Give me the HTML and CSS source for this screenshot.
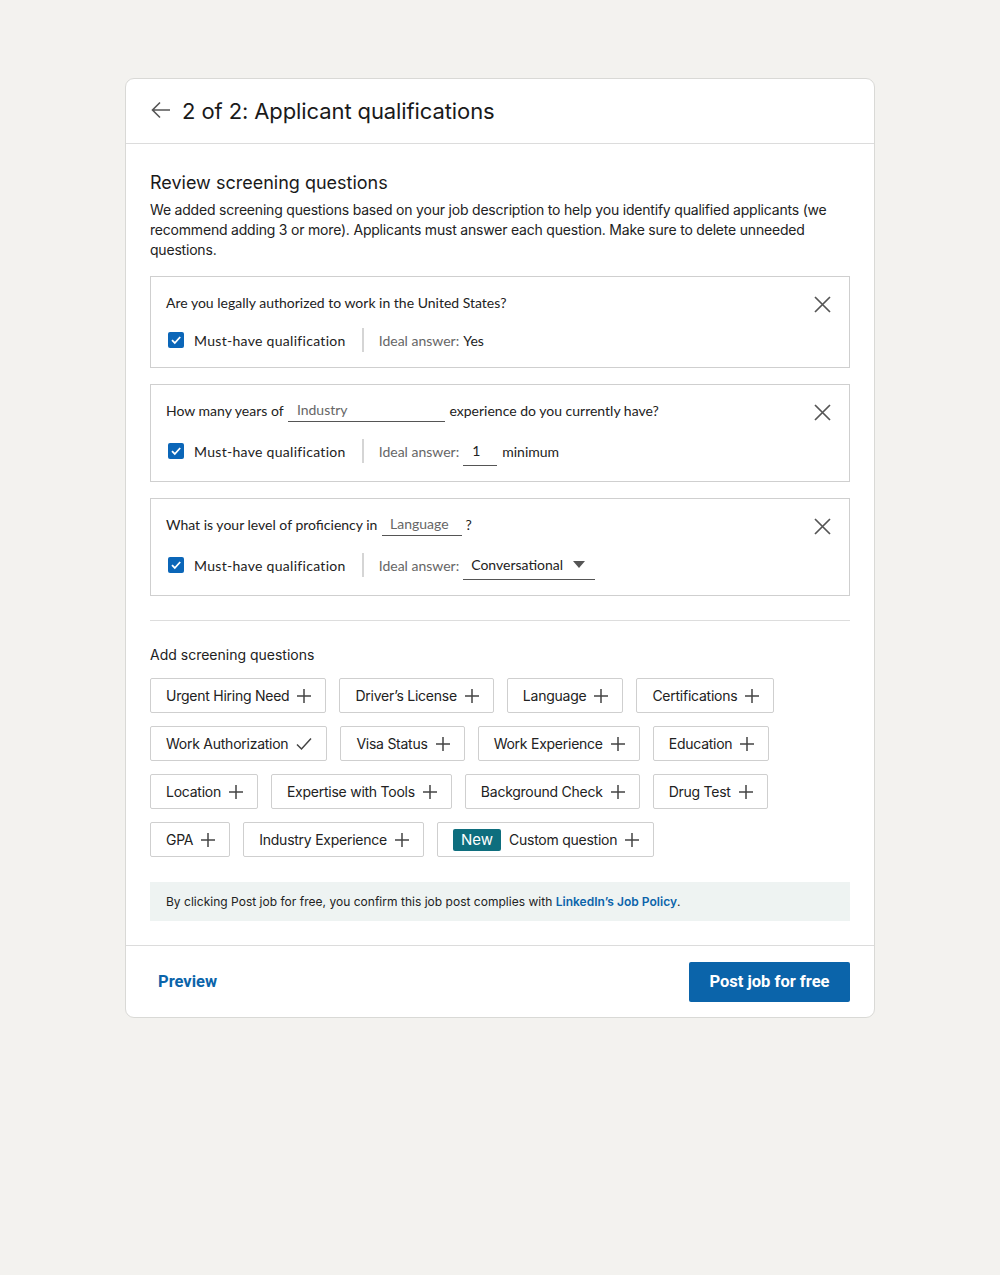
FILE: index.html
```html
<!DOCTYPE html>
<html lang="en">
<head>
<meta charset="utf-8">
<title>Applicant qualifications</title>
<link rel="stylesheet" href="styles.css">
</head>
<body>
<div class="card">
  <header class="card-head">
    <svg class="back" width="22" height="22" viewBox="0 0 22 22"><path d="M20 11H3M10 3.5L2.5 11L10 18.5" fill="none" stroke="#555" stroke-width="1.6"/></svg>
    <h1 class="title">2 of 2: Applicant qualifications</h1>
  </header>
  <main class="card-body">
    <h2 class="sec-title">Review screening questions</h2>
    <p class="desc">We added screening questions based on your job description to help you identify qualified applicants (we recommend adding 3 or more). Applicants must answer each question. Make sure to delete unneeded questions.</p>

    <div class="qbox">
      <div class="qmain">
        <div class="qline">Are you legally authorized to work in the United States?</div>
        <div class="qrow">
          <span class="cb"><svg width="12" height="12" viewBox="0 0 12 12"><path d="M2 6.2l2.8 2.8L10.2 3" fill="none" stroke="#fff" stroke-width="1.8"/></svg></span>
          <span class="must">Must-have qualification</span>
          <span class="vdiv"></span>
          <span class="ideal">Ideal answer:</span><span class="ans">Yes</span>
        </div>
      </div>
      <button class="close"><svg width="17" height="17" viewBox="0 0 17 17"><path d="M1 1l15 15M16 1L1 16" stroke="#555" stroke-width="1.7"/></svg></button>
    </div>

    <div class="qbox">
      <div class="qmain">
        <div class="qline">How many years of <span class="field f-industry">Industry</span> experience do you currently have?</div>
        <div class="qrow">
          <span class="cb"><svg width="12" height="12" viewBox="0 0 12 12"><path d="M2 6.2l2.8 2.8L10.2 3" fill="none" stroke="#fff" stroke-width="1.8"/></svg></span>
          <span class="must">Must-have qualification</span>
          <span class="vdiv"></span>
          <span class="ideal">Ideal answer:</span><span class="field f-num">1</span><span class="ans">minimum</span>
        </div>
      </div>
      <button class="close"><svg width="17" height="17" viewBox="0 0 17 17"><path d="M1 1l15 15M16 1L1 16" stroke="#555" stroke-width="1.7"/></svg></button>
    </div>

    <div class="qbox">
      <div class="qmain">
        <div class="qline">What is your level of proficiency in <span class="field f-lang">Language</span> ?</div>
        <div class="qrow">
          <span class="cb"><svg width="12" height="12" viewBox="0 0 12 12"><path d="M2 6.2l2.8 2.8L10.2 3" fill="none" stroke="#fff" stroke-width="1.8"/></svg></span>
          <span class="must">Must-have qualification</span>
          <span class="vdiv"></span>
          <span class="ideal">Ideal answer:</span><span class="field f-select">Conversational<svg width="12" height="7" viewBox="0 0 12 7"><path d="M0 0h12L6 7z" fill="#555"/></svg></span>
        </div>
      </div>
      <button class="close"><svg width="17" height="17" viewBox="0 0 17 17"><path d="M1 1l15 15M16 1L1 16" stroke="#555" stroke-width="1.7"/></svg></button>
    </div>

    <hr class="divider">

    <h3 class="add-title">Add screening questions</h3>
    <div class="chips">
      <div class="chip-row">
        <span class="chip">Urgent Hiring Need<svg class="plus" width="14" height="14" viewBox="0 0 14 14"><path d="M7 0v14M0 7h14" stroke="#444" stroke-width="1.5"/></svg></span>
        <span class="chip">Driver’s License<svg class="plus" width="14" height="14" viewBox="0 0 14 14"><path d="M7 0v14M0 7h14" stroke="#444" stroke-width="1.5"/></svg></span>
        <span class="chip">Language<svg class="plus" width="14" height="14" viewBox="0 0 14 14"><path d="M7 0v14M0 7h14" stroke="#444" stroke-width="1.5"/></svg></span>
        <span class="chip">Certifications<svg class="plus" width="14" height="14" viewBox="0 0 14 14"><path d="M7 0v14M0 7h14" stroke="#444" stroke-width="1.5"/></svg></span>
      </div>
      <div class="chip-row">
        <span class="chip">Work Authorization<svg class="plus" width="16" height="14" viewBox="0 0 16 14"><path d="M1 7.5l4.5 4.5L15 1.5" fill="none" stroke="#444" stroke-width="1.5"/></svg></span>
        <span class="chip">Visa Status<svg class="plus" width="14" height="14" viewBox="0 0 14 14"><path d="M7 0v14M0 7h14" stroke="#444" stroke-width="1.5"/></svg></span>
        <span class="chip">Work Experience<svg class="plus" width="14" height="14" viewBox="0 0 14 14"><path d="M7 0v14M0 7h14" stroke="#444" stroke-width="1.5"/></svg></span>
        <span class="chip">Education<svg class="plus" width="14" height="14" viewBox="0 0 14 14"><path d="M7 0v14M0 7h14" stroke="#444" stroke-width="1.5"/></svg></span>
      </div>
      <div class="chip-row">
        <span class="chip">Location<svg class="plus" width="14" height="14" viewBox="0 0 14 14"><path d="M7 0v14M0 7h14" stroke="#444" stroke-width="1.5"/></svg></span>
        <span class="chip">Expertise with Tools<svg class="plus" width="14" height="14" viewBox="0 0 14 14"><path d="M7 0v14M0 7h14" stroke="#444" stroke-width="1.5"/></svg></span>
        <span class="chip">Background Check<svg class="plus" width="14" height="14" viewBox="0 0 14 14"><path d="M7 0v14M0 7h14" stroke="#444" stroke-width="1.5"/></svg></span>
        <span class="chip">Drug Test<svg class="plus" width="14" height="14" viewBox="0 0 14 14"><path d="M7 0v14M0 7h14" stroke="#444" stroke-width="1.5"/></svg></span>
      </div>
      <div class="chip-row">
        <span class="chip">GPA<svg class="plus" width="14" height="14" viewBox="0 0 14 14"><path d="M7 0v14M0 7h14" stroke="#444" stroke-width="1.5"/></svg></span>
        <span class="chip">Industry Experience<svg class="plus" width="14" height="14" viewBox="0 0 14 14"><path d="M7 0v14M0 7h14" stroke="#444" stroke-width="1.5"/></svg></span>
        <span class="chip chip-new"><span class="badge">New</span>Custom question<svg class="plus" width="14" height="14" viewBox="0 0 14 14"><path d="M7 0v14M0 7h14" stroke="#444" stroke-width="1.5"/></svg></span>
      </div>
    </div>

    <div class="notice">By clicking Post job for free, you confirm this job post complies with <a class="policy" href="#">LinkedIn’s Job Policy</a>.</div>
  </main>
  <footer class="card-foot">
    <button class="preview">Preview</button>
    <button class="post">Post job for free</button>
  </footer>
</div>
</body>
</html>
```

FILE: styles.css
```css
* { box-sizing: border-box; }
body {
  margin: 0;
  background: #f3f2ef;
  font-family: Inter, "Liberation Sans", sans-serif;
  color: #1d1d1d;
}
.card {
  width: 750px;
  margin: 78px 0 0 125px;
  background: #fff;
  border: 1px solid #d9d9d6;
  border-radius: 9px;
}
.card-head {
  height: 65px;
  display: flex;
  align-items: center;
  padding: 0 24px;
  border-bottom: 1px solid #dcdcdc;
  gap: 10px;
}
.back { display: block; margin-top: -2px; }
.title {
  margin: 0;
  font-size: 22px;
  font-weight: 400;
  color: #1a1a1a;
  letter-spacing: -0.1px;
}
.card-body { padding: 27px 24px 24px; }
.sec-title {
  margin: 0;
  font-size: 18px;
  line-height: 24px;
  font-weight: 400;
  color: #1a1a1a;
}
.desc {
  margin: 5px 0 16px;
  font-size: 14px;
  line-height: 20px;
  color: #222;
  letter-spacing: -0.2px;
}
.qbox {
  display: flex;
  border: 1px solid #cfcfcf;
  padding: 13px 18px 15px 15px;
  margin-bottom: 16px;
  font-family: Lato, "Open Sans", sans-serif;
  font-size: 14px;
  color: #222;
}
.qbox:last-of-type { margin-bottom: 0; }
.qmain { flex: 1; }
.qline {
  height: 24px;
  display: flex;
  align-items: center;
  white-space: pre;
}
.qrow {
  display: flex;
  align-items: center;
  min-height: 24px;
  margin-top: 14px;
}
.cb {
  width: 16px;
  height: 16px;
  margin: 0 10px 0 2px;
  border-radius: 2px;
  background: #0b66b8;
  display: flex;
  align-items: center;
  justify-content: center;
}
.must { color: #222; letter-spacing: 0.3px; }
.vdiv {
  width: 2px;
  height: 24px;
  background: #d5d5d5;
  margin: 0 15px 0 16px;
}
.ideal { color: #666; margin-right: 4px; }
.ans { color: #222; }
.field {
  display: inline-flex;
  align-items: center;
  height: 24px;
  border-bottom: 1px solid #555;
  padding-left: 9px;
  color: #666;
}
.f-industry { width: 157px; margin: 0 1px; }
.f-lang { width: 80px; margin: 0 0 0 1px; padding-left: 8px; }
.f-num { width: 34px; color: #222; margin: 0 5px 0 0; height: 30px; }
.f-select {
  width: 132px;
  color: #222;
  height: 30px;
  padding-left: 8px;
  justify-content: space-between;
  padding-right: 10px;
}
.close {
  border: 0;
  background: none;
  padding: 0;
  width: 17px;
  height: 17px;
  margin-top: 6px;
  cursor: pointer;
}
.close svg { display: block; }
.divider {
  border: 0;
  border-top: 1px solid #ddd;
  margin: 24px 0 24px;
}
.add-title {
  margin: 0 0 13px;
  font-size: 14px;
  line-height: 20px;
  font-weight: 400;
  color: #222;
}
.chips { display: flex; flex-direction: column; gap: 13px; }
.chip-row { display: flex; gap: 13px; }
.chip {
  display: inline-flex;
  align-items: center;
  height: 35px;
  padding: 0 14px 0 15px;
  border: 1px solid #cfcfcf;
  border-radius: 2px;
  font-size: 14px;
  color: #222;
  letter-spacing: -0.25px;
  gap: 8px;
}
.badge {
  background: #0e6e7e;
  color: #fff;
  font-size: 15px;
  height: 22px;
  padding: 0 8px;
  border-radius: 2px;
  display: inline-flex;
  align-items: center;
  letter-spacing: 0;
}
.plus { display: block; }
.notice {
  margin-top: 25px;
  background: #eef3f2;
  padding: 0 16px;
  height: 39px;
  display: flex;
  align-items: center;
  font-family: Inter, "Liberation Sans", sans-serif;
  font-size: 12px;
  color: #222;
  letter-spacing: 0.02px;
  white-space: pre;
}
.policy { color: #0b64aa; font-weight: 600; text-decoration: none; }
.card-foot {
  border-top: 1px solid #dcdcdc;
  height: 72px;
  display: flex;
  align-items: center;
  justify-content: space-between;
  padding: 0 24px;
}
.preview {
  border: 0;
  background: none;
  font-family: Roboto, "Liberation Sans", sans-serif;
  font-weight: 700;
  font-size: 16.5px;
  color: #0b64aa;
  padding: 0 8px;
}
.post {
  border: 0;
  background: #0b64aa;
  color: #fff;
  font-family: Roboto, "Liberation Sans", sans-serif;
  font-weight: 700;
  font-size: 16.5px;
  width: 161px;
  height: 40px;
  border-radius: 2px;
}
```
